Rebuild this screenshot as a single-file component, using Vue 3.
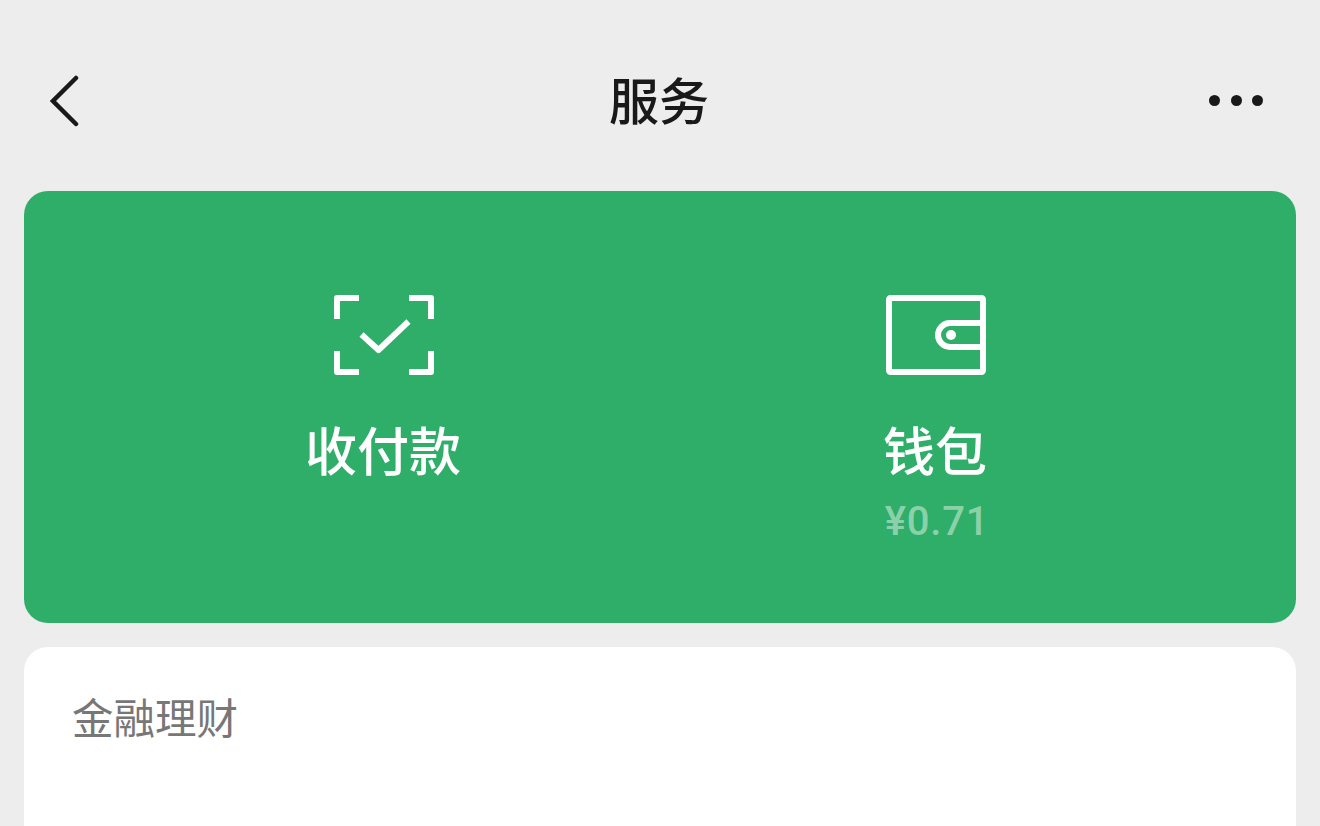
<template>
  <div class="page">
    <!-- Nav bar -->
    <header class="nav">
      <svg class="back" width="32" height="52" viewBox="0 0 32 52" fill="none">
        <path d="M26 3 L3 26 L26 49" stroke="#191919" stroke-width="4.5" stroke-linecap="round" />
      </svg>
      <h1 class="title">服务</h1>
      <div class="more">
        <span class="dot"></span>
        <span class="dot"></span>
        <span class="dot"></span>
      </div>
    </header>

    <!-- Green panel -->
    <section class="panel">
      <div v-for="item in actions" :key="item.label" class="action">
        <svg v-if="item.icon === 'pay'" class="icon" width="100" height="80" viewBox="0 0 100 80" fill="none" stroke="#fff" stroke-width="6" stroke-linejoin="round">
          <path d="M3 24 V3 H25" />
          <path d="M75 3 H97 V24" />
          <path d="M3 56 V77 H25" />
          <path d="M75 77 H97 V56" />
          <path d="M27.5 39.5 L44.5 55 L74.5 26.5" />
        </svg>
        <svg v-else class="icon" width="100" height="80" viewBox="0 0 100 80" fill="none" stroke="#fff" stroke-width="6" stroke-linejoin="round">
          <rect x="3" y="3" width="94" height="74" rx="1.5" />
          <path d="M97 28 H64 A12 12 0 0 0 64 52 H97" />
          <circle cx="65" cy="40" r="5" fill="#fff" stroke="none" />
        </svg>
        <div class="label">{{ item.label }}</div>
        <div v-if="item.sub" class="sub">{{ item.sub }}</div>
      </div>
    </section>

    <!-- Finance section -->
    <section class="card">
      <div class="card-title">金融理财</div>
    </section>
  </div>
</template>

<script setup>
const actions = [
  { icon: 'pay', label: '收付款' },
  { icon: 'wallet', label: '钱包', sub: '¥0.71' },
]
</script>

<style>
html,
body {
  margin: 0;
  background: #ededed;
}
</style>

<style scoped>
.page {
  height: 826px;
  overflow: hidden;
  background: #ededed;
  font-family: 'Roboto', 'Noto Sans CJK SC', sans-serif;
  padding: 0 24px;
  box-sizing: border-box;
}

.nav {
  height: 191px;
  display: flex;
  align-items: center;
  justify-content: space-between;
  padding: 10px 33px 0 26px;
  box-sizing: border-box;
  position: relative;
}

.back {
  display: block;
}

.title {
  position: absolute;
  left: -2px;
  right: 0;
  top: 62px;
  margin: 0;
  text-align: center;
  font-size: 50px;
  line-height: 72px;
  font-weight: 500;
  color: #191919;
  font-family: 'Noto Sans CJK SC', sans-serif;
}

.more {
  display: flex;
  gap: 10.5px;
}

.dot {
  width: 11px;
  height: 11px;
  border-radius: 50%;
  background: #191919;
}

.panel {
  height: 432px;
  border-radius: 24px;
  background: #2fae69;
  display: grid;
  grid-template-columns: 1fr 1fr;
  padding: 104px 84px 0;
  box-sizing: border-box;
}

.action {
  display: flex;
  flex-direction: column;
  align-items: center;
}

.icon {
  display: block;
}

.label {
  margin-top: 37px;
  margin-right: 2px;
  font-family: 'Noto Sans CJK SC', sans-serif;
  font-size: 52px;
  line-height: 74px;
  font-weight: 500;
  color: #fff;
}

.sub {
  margin-top: 8px;
  margin-left: 2px;
  font-size: 40px;
  line-height: 56px;
  letter-spacing: 0.8px;
  font-weight: 500;
  color: rgba(255, 255, 255, 0.45);
}

.card {
  margin-top: 24px;
  height: 300px;
  border-radius: 24px;
  background: #fff;
  padding: 39px 49px;
  box-sizing: border-box;
}

.card-title {
  font-family: 'Noto Sans CJK SC', sans-serif;
  font-size: 41.5px;
  line-height: 60px;
  color: #777;
  margin-left: -1px;
}
</style>
